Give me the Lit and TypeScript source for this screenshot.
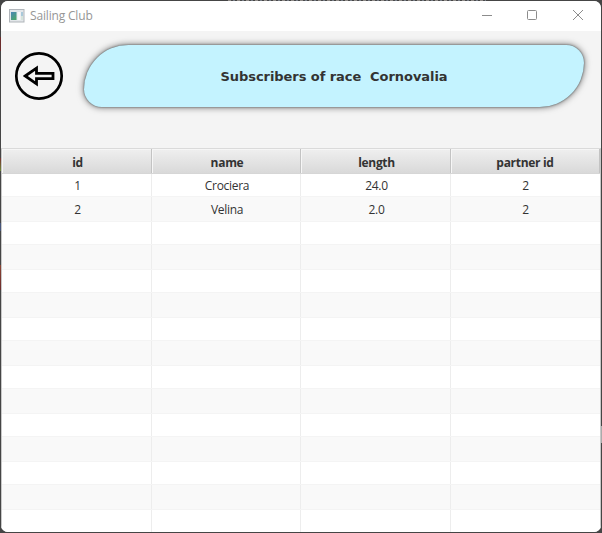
import { LitElement, html, css } from "lit";
import { customElement } from "lit/decorators.js";

interface Boat {
  id: string;
  name: string;
  length: string;
  partner: string;
}

const BOATS: Boat[] = [
  { id: "1", name: "Crociera", length: "24.0", partner: "2" },
  { id: "2", name: "Velina", length: "2.0", partner: "2" },
];
const ROW_COUNT = 15;

@customElement("title-bar")
class TitleBar extends LitElement {
  static styles = css`
    :host {
      display: flex;
      align-items: center;
      flex: none;
      height: 30px;
      background: #fff;
      color: #969696;
      font: 12px/30px "Open Sans", "Noto Sans", sans-serif;
    }
    .icon { margin-left: 8px; width: 16px; height: 14px; flex: none; }
    .name { margin-left: 5px; flex: 1; letter-spacing: -0.17px; }
    .controls { flex: none; width: 136px; height: 30px; }
  `;
  render() {
    return html`
      <svg class="icon" viewBox="0 0 16 14">
        <defs>
          <linearGradient id="pane" x2="0.6" y2="1">
            <stop offset="0" stop-color="#4b86b8" />
            <stop offset="1" stop-color="#4da56f" />
          </linearGradient>
        </defs>
        <rect x="0.5" y="0.5" width="14.5" height="12.5" fill="#e3e7ea" stroke="#b0b5ba" />
        <rect x="2" y="3" width="5.5" height="8" fill="url(#pane)" />
        <rect x="8.5" y="3" width="3" height="8" fill="#f8f8f8" />
        <rect x="12" y="3" width="2" height="4" fill="#a9c9da" />
        <rect x="12" y="7" width="2" height="4" fill="#d5e4db" />
      </svg>
      <span class="name">Sailing Club</span>
      <svg class="controls" viewBox="0 0 136 30" fill="none" stroke="#8c8c8c">
        <path d="M17 14.5h10" />
        <rect x="62.5" y="9.5" width="9" height="9" rx="1" />
        <path d="M108 9l10 10M118 9l-10 10" />
      </svg>
    `;
  }
}

@customElement("race-header")
class RaceHeader extends LitElement {
  static styles = css`
    :host {
      display: flex;
      align-items: flex-start;
      flex: none;
      box-sizing: border-box;
      height: 117px;
      padding: 14px 17px 0 13px;
      background: #f4f4f4;
    }
    .back { flex: none; width: 50px; height: 50px; margin: 6px 20px 0 0; }
    .banner {
      flex: 1;
      height: 62px;
      border-radius: 45px 18px 45px 18px;
      background: #c4f3ff;
      box-shadow: 0 0 2px rgba(0, 0, 0, 0.55), 0 0 7px rgba(0, 0, 0, 0.6);
      color: #333;
      font: bold 13px/64px "DejaVu Sans", Verdana, sans-serif;
      letter-spacing: -0.06px;
      text-align: center;
      white-space: pre;
    }
  `;
  render() {
    return html`
      <svg class="back" viewBox="0 0 50 50" fill="none" stroke="#000">
        <circle cx="25" cy="25" r="22.7" stroke-width="2.7" />
        <path d="M11.2 25L22.5 17.2V22.4H39V27.6H22.5V32.8Z" stroke-width="2.8" />
      </svg>
      <div class="banner">Subscribers of race  Cornovalia</div>
    `;
  }
}

@customElement("boat-table")
class BoatTable extends LitElement {
  static styles = css`
    :host {
      display: flex;
      flex-direction: column;
      flex: 1;
      min-height: 0;
      box-sizing: border-box;
      border: solid #c8c8c8;
      border-width: 1px 1px 0 1px;
      border-top-color: #dadada;
      background: #fff;
      color: #333;
      font: 12px/24px "Open Sans", "Noto Sans", sans-serif;
      text-align: center;
      overflow: hidden;
    }
    .row {
      display: grid;
      grid-template-columns: 150px 149px 150px 1fr;
      grid-template-rows: 100%;
      flex: none;
      box-sizing: border-box;
      height: 24px;
    }
    .head {
      height: 25px;
      border-bottom: 1px solid #d6d6d6;
      background: linear-gradient(#efefef, #d9d9d9);
      font-weight: bold;
      line-height: 27px;
    }
    .cell {
      box-sizing: border-box;
      padding-left: 2px;
      border-right: 1px solid #ededed;
      letter-spacing: -0.3px;
    }
    .cell:last-child { padding-left: 0; }
    .head .cell {
      border-right-color: #c3c3c3;
      box-shadow: inset 1px 1px #f6f6f6;
    }
    .row:not(.head) .cell:last-child { border-right: 0; }
    .plain { height: 22px; }
    .striped {
      height: 26px;
      border: solid #f4f4f4;
      border-width: 1px 0;
      background: #f9f9f9;
      line-height: 26px;
    }
  `;
  render() {
    const rows = Array.from({ length: ROW_COUNT }, (_, i) => BOATS[i]);
    return html`
      <div class="row head">
        ${["id", "name", "length", "partner id"].map((t) => html`<div class="cell">${t}</div>`)}
      </div>
      ${rows.map(
        (b, i) => html`<div class="row ${i % 2 ? "striped" : "plain"}">
          <div class="cell">${b?.id}</div>
          <div class="cell">${b?.name}</div>
          <div class="cell">${b?.length}</div>
          <div class="cell">${b?.partner}</div>
        </div>`
      )}
    `;
  }
}

@customElement("app-root")
class AppRoot extends LitElement {
  /* The outer pixel shows slivers of the desktop behind the window. */
  static styles = css`
    :host {
      display: block;
      box-sizing: border-box;
      width: 602px;
      height: 533px;
      padding: 1px;
      background:
        repeating-linear-gradient(90deg, #8f8b88 0 3px, #4a4a4c 3px 5px, #777d86 5px 7px, #454545 7px 9px) 228px 0 / 258px 1px no-repeat,
        linear-gradient(#6b2c2c, #6b2c2c) 0 37px / 1px 14px no-repeat,
        linear-gradient(#7a3030, #6b8a35) 0 158px / 1px 13px no-repeat,
        linear-gradient(#46557a, #46557a) 0 223px / 1px 8px no-repeat,
        linear-gradient(#8a4434, #6e2c2c) 0 265px / 1px 25px no-repeat,
        linear-gradient(#aaa, #aaa) 601px 426px / 1px 17px no-repeat,
        #454545;
    }
    .window {
      display: flex;
      flex-direction: column;
      height: 531px;
      border-radius: 7px;
      overflow: hidden;
      background: #fff;
    }
  `;
  render() {
    return html`
      <div class="window">
        <title-bar></title-bar>
        <race-header></race-header>
        <boat-table></boat-table>
      </div>
    `;
  }
}
